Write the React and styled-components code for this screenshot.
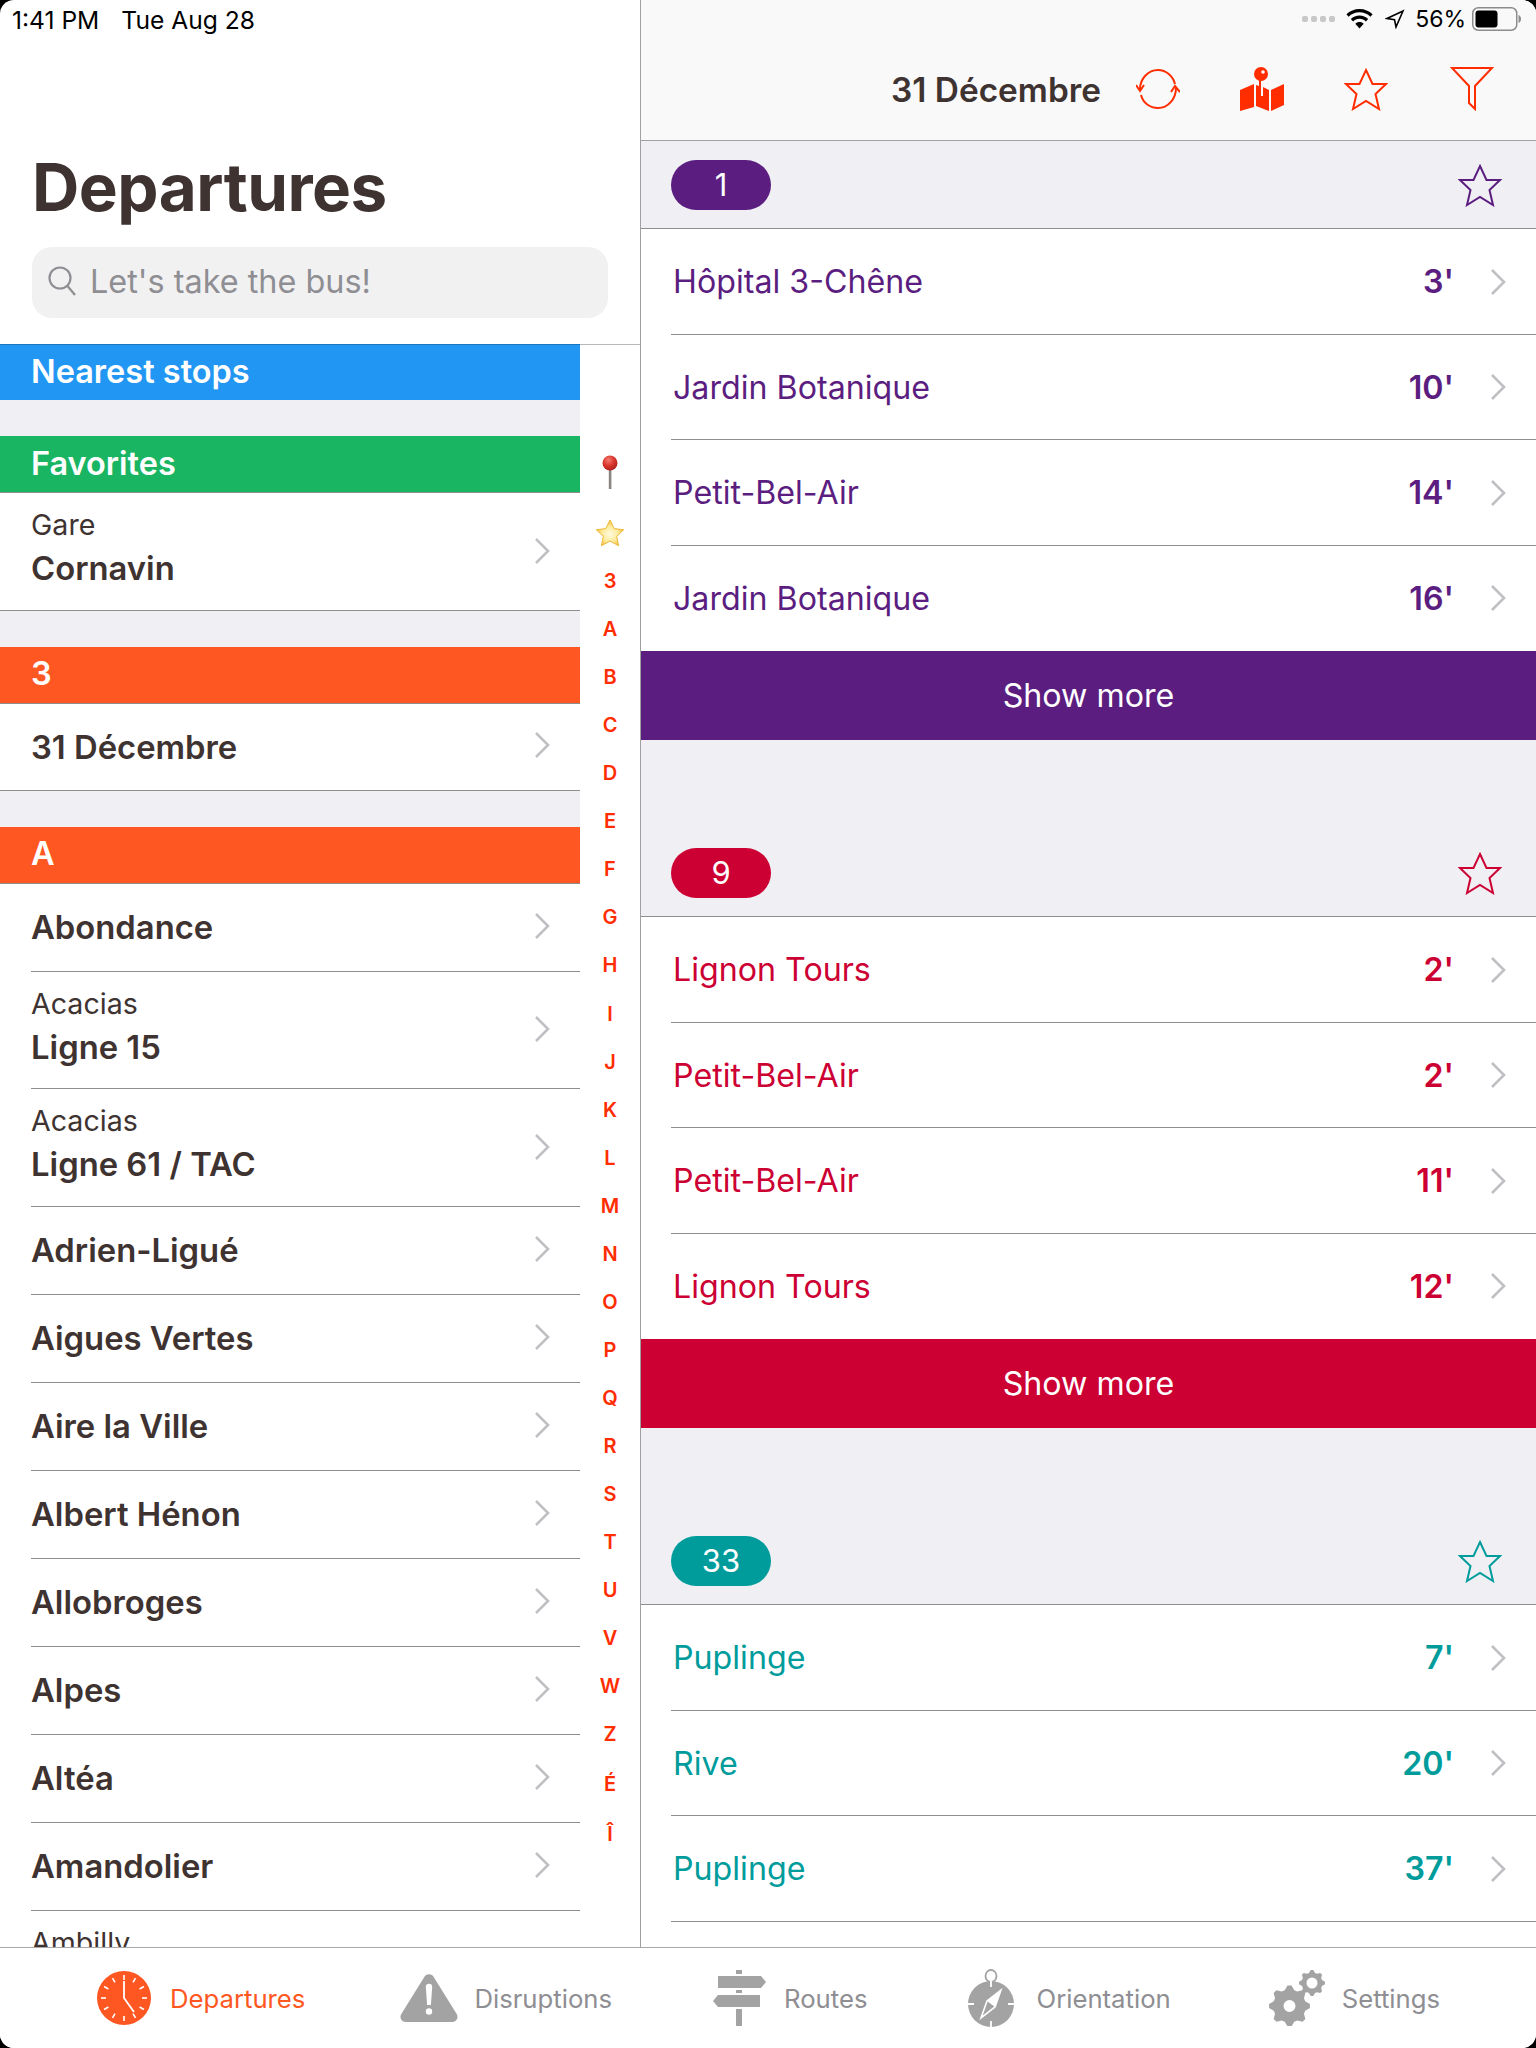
import React from "react";
import styled, { createGlobalStyle } from "styled-components";

const TINT = "#ff2d00";
const INK = "#3e3331";
const GREY = "#efeff4";
const LINE = "#8e8e8e";
const ICON = "#a3a3a3";

const Global = createGlobalStyle`
  html, body { margin: 0; padding: 0; background: #000; }
  body { font-family: Inter, "Liberation Sans", sans-serif; color: ${INK}; }
  * { box-sizing: border-box; }
`;

const Screen = styled.div`
  width: 1536px;
  height: 2048px;
  background: #fff;
  border-radius: 14px;
  overflow: hidden;
  display: flex;
  flex-direction: column;
`;
const Panels = styled.div`
  flex: 1;
  min-height: 0;
  display: flex;
`;
const Master = styled.div`
  width: 641px;
  border-right: 1px solid #a0a0a0;
  display: flex;
  flex-direction: column;
  overflow: hidden;
`;
const MasterHead = styled.div`
  height: 344px;
  padding: 6px 32px 0;
  flex: none;
`;
const Clock = styled.div`
  margin-left: -20px;
  font-size: 24.6px;
  line-height: 28px;
  color: #000;
  span { margin-left: 22px; }
`;
const Title = styled.h1`
  margin: 118px 0 0;
  font-size: 65.5px;
  line-height: 72px;
  font-weight: 700;
  letter-spacing: -0.5px;
`;
const Search = styled.div`
  margin-top: 23px;
  width: 576px;
  height: 71px;
  border-radius: 20px;
  background: #f1f1f2;
  display: flex;
  align-items: center;
  padding: 0 0 3px 15px;
  gap: 13px;
  font-size: 32.4px;
  color: #8e8e93;
`;
const MasterBody = styled.div`
  flex: 1;
  min-height: 0;
  display: flex;
`;
const StopList = styled.div`
  width: 580px;
  overflow: hidden;
`;
const IndexBar = styled.div`
  width: 60px;
  border-top: 1px solid #b8b8b8;
  padding-top: 103px;
  display: flex;
  flex-direction: column;
  align-items: center;
  color: ${TINT};
  font-size: 20px;
  font-weight: 600;
`;
const IndexItem = styled.div`
  height: ${(p) => (p.$tall ? 52 : 48.05)}px;
  flex: none;
  display: flex;
  align-items: center;
  justify-content: center;
`;
const PinItem = styled(IndexItem)`
  margin-bottom: 13px;
`;
const Band = styled.div`
  height: 57px;
  padding: 0 0 2px 31px;
  background: ${(p) => p.$bg};
  border-bottom: 1px solid ${LINE};
  color: #fff;
  font-size: 32.5px;
  font-weight: 600;
  display: flex;
  align-items: center;
`;
const NearestBand = styled(Band)`
  height: 56px;
  border-bottom: none;
  border-top: 1px solid #1a76bd;
`;
const Gap = styled.div`
  height: 36px;
  background: ${GREY};
`;
const StopRow = styled.div`
  position: relative;
  height: ${(p) => p.$h}px;
  padding: 0 30px ${(p) => (p.$hasSub ? 2 : 4)}px 31px;
  display: flex;
  align-items: center;
  justify-content: space-between;
  &::after {
    content: "";
    position: absolute;
    left: ${(p) => (p.$full ? 0 : "31px")};
    right: 0;
    bottom: 0;
    height: 1px;
    background: ${LINE};
  }
`;
const StopText = styled.div`
  display: flex;
  flex-direction: column;
  margin: ${(p) => (p.$hasSub ? "0 0 3px" : "3px 0 0")};
`;
const StopSub = styled.div`
  font-size: 28.6px;
  line-height: 38px;
`;
const StopName = styled.div`
  font-size: 32.8px;
  line-height: 48px;
  font-weight: 600;
  min-height: 48px;
`;

const Detail = styled.div`
  flex: 1;
  min-width: 0;
  overflow: hidden;
  background: ${GREY};
`;
const DetailHead = styled.div`
  height: 141px;
  background: #f9f9f9;
  border-bottom: 1px solid #a0a0a0;
`;
const StatusRight = styled.div`
  height: 30px;
  padding: 8px 15px 0 0;
  display: flex;
  justify-content: flex-end;
  align-items: center;
  font-size: 23px;
  color: #000;
`;
const Dots = styled.div`
  display: flex;
  gap: 3px;
  margin-right: 11px;
  i { width: 6px; height: 6px; border-radius: 2px; background: #c8c8c8; }
`;
const WifiWrap = styled.div`
  display: flex;
  margin-right: 12px;
`;
const Percent = styled.span`
  margin: 0 6px 0 10px;
`;
const NavBar = styled.div`
  height: 110px;
  padding: 37px 42px 0 0;
  display: flex;
  justify-content: flex-end;
  align-items: flex-start;
`;
const NavTitle = styled.div`
  height: 44px;
  line-height: 46px;
  font-size: 33.4px;
  font-weight: 600;
  margin-right: 35px;
`;
const NavIcon = styled.div`
  width: 44px;
  height: 44px;
  margin-left: ${(p) => p.$gap || 0}px;
`;
const LineSection = styled.section`
  margin-bottom: 89px;
`;
const LineHead = styled.div`
  height: 88px;
  padding: 0 34px 0 30px;
  background: ${GREY};
  border-bottom: 1px solid ${LINE};
  display: flex;
  align-items: center;
  justify-content: space-between;
`;
const Pill = styled.div`
  width: 100px;
  height: 50px;
  border-radius: 25px;
  background: ${(p) => p.$color};
  color: #fff;
  font-size: 31px;
  display: flex;
  align-items: center;
  justify-content: center;
`;
const DepartureRow = styled.div`
  position: relative;
  height: 105.5px;
  padding: 0 30px 0 32px;
  background: #fff;
  display: flex;
  align-items: center;
  font-size: 32.2px;
  color: ${(p) => p.$color};
  &::after {
    content: "";
    display: ${(p) => (p.$last ? "none" : "block")};
    position: absolute;
    left: 30px;
    right: 0;
    bottom: 0;
    height: 1px;
    background: ${LINE};
  }
`;
const Destination = styled.div`
  flex: 1;
`;
const Minutes = styled.div`
  font-weight: 600;
  margin-right: 36px;
`;
const ShowMore = styled.div`
  height: 89px;
  background: ${(p) => p.$color};
  color: #fff;
  font-size: 32.2px;
  display: flex;
  align-items: center;
  justify-content: center;
`;

const TabBar = styled.div`
  height: 101px;
  flex: none;
  background: #fff;
  border-top: 1px solid #a8a8a8;
  padding-left: 97px;
  display: flex;
  align-items: center;
`;
const Tab = styled.div`
  display: flex;
  align-items: center;
  margin-left: ${(p) => p.$left || 0}px;
  gap: ${(p) => p.$gap}px;
  font-size: 25.7px;
  color: ${(p) => (p.$active ? "#ff5722" : "#8e8e93")};
`;

const Chevron = () => (
  <svg width="16" height="28" viewBox="0 0 16 28" fill="none" stroke="#c0c0c4" strokeWidth="2.6">
    <path d="M2 2l12 12L2 26" />
  </svg>
);

const StarOutline = ({ color, size = 44 }) => (
  <svg width={size} height={size} viewBox="0 0 44 44" fill="none" stroke={color} strokeWidth="2">
    <path d="M22 3l6.5 14H42L31.5 27l3.5 15L22 34 9 42l3.5-15L2 17h13.5z" />
  </svg>
);

const Refresh = () => (
  <svg width="44" height="44" viewBox="0 0 44 44" fill="none" stroke={TINT} strokeWidth="2">
    <path d="M4 22C4 12 12 3 22 3c8 0 15 6 17 14" />
    <path d="M40 21c0 11-8 20-18 20-8 0-15-5-17-13" />
    <path d="M0 18l4 6 4-6" />
    <path d="M35 25l4-6 5 6" />
  </svg>
);

const MapPin = () => (
  <svg width="44" height="44" viewBox="0 0 44 44" fill={TINT}>
    <circle cx="21" cy="7" r="7" />
    <circle cx="23" cy="5" r="1.8" fill="#f9f9f9" />
    <path d="M0 23l14-6v23L0 44z" />
    <path d="M16 18l3 1V13h2v16h2V20l6 3v21l-13-5z" />
    <path d="M31 23l13-6v21l-13 6z" />
  </svg>
);

const Funnel = () => (
  <svg width="44" height="44" viewBox="0 0 44 44" fill="none" stroke={TINT} strokeWidth="2">
    <path d="M2 1h40L25 19v23l-6-6V19z" />
  </svg>
);

const SearchGlass = () => (
  <svg width="30" height="32" viewBox="0 0 30 32" fill="none" stroke="#8e8e93" strokeWidth="2.2">
    <circle cx="13" cy="13" r="10.5" />
    <path d="M20.5 21L28 30" />
  </svg>
);

const Wifi = () => (
  <svg width="27" height="20" viewBox="0 0 27 20" fill="#000">
    <path d="M13.5 0C8.4 0 3.8 2 .4 5.3l2.2 2.4C5.4 5 9.3 3.3 13.5 3.3S21.600 5 24.400 7.700l2.200-2.400C23.200 2 18.600 0 13.500 0z" />
    <path d="M13.500 6.500c-3.300 0-6.400 1.300-8.700 3.500l2.300 2.400c1.700-1.600 3.900-2.600 6.400-2.600s4.700 1 6.400 2.600l2.300-2.400c-2.300-2.200-5.400-3.500-8.700-3.500z" />
    <path d="M13.500 13c-1.600 0-3.100.6-4.200 1.700l4.200 4.800 4.200-4.800C16.600 13.600 15.100 13 13.500 13z" />
  </svg>
);

const Arrow = () => (
  <svg width="20" height="20" viewBox="0 0 20 20" fill="none" stroke="#000" strokeWidth="1.6">
    <path d="M18 2L2 9.500l7.500 1.200L11 18z" />
  </svg>
);

const Battery = () => (
  <svg width="49" height="24" viewBox="0 0 49 24">
    <rect x=".75" y=".75" width="44" height="22.500" rx="5.500" fill="none" stroke="#8c8c8c" strokeWidth="1.500" />
    <rect x="3.500" y="3.500" width="22" height="17" rx="3" fill="#000" />
    <path d="M46.500 8c1.500.4 2.500 2 2.500 4s-1 3.600-2.500 4z" fill="#8c8c8c" />
  </svg>
);

const RedPin = () => (
  <svg width="18" height="36" viewBox="0 0 18 36">
    <defs>
      <radialGradient id="pinHead" cx="0.4" cy="0.3" r="0.8">
        <stop offset="0" stopColor="#f47a6e" />
        <stop offset="0.5" stopColor="#d8342b" />
        <stop offset="1" stopColor="#a31b1b" />
      </radialGradient>
    </defs>
    <rect x="7.800" y="12" width="2.600" height="23" fill="#8a8683" />
    <circle cx="9" cy="9" r="7.500" fill="url(#pinHead)" />
  </svg>
);

const GoldStar = () => (
  <svg width="30" height="28" viewBox="0 0 30 28">
    <defs>
      <radialGradient id="goldStar" cx="0.5" cy="0.55" r="0.55">
        <stop offset="0" stopColor="#fffbe0" />
        <stop offset="0.55" stopColor="#fdea9a" />
        <stop offset="1" stopColor="#f2b632" />
      </radialGradient>
    </defs>
    <path
      d="M15 1l4.200 8.600 9.500 1.200-7 6.500 1.900 9.400L15 22.100l-8.600 4.600 1.900-9.400-7-6.500 9.500-1.200z"
      fill="url(#goldStar)"
      stroke="#edb93a"
      strokeWidth="1"
      strokeLinejoin="round"
    />
  </svg>
);

const ClockIcon = () => {
  const ticks = Array.from({ length: 12 }, (_, i) => i * 30);
  return (
    <svg width="54" height="54" viewBox="0 0 54 54">
      <circle cx="27" cy="27" r="27" fill="#ff5722" />
      {ticks.map((a) => (
        <rect key={a} x="26.200" y="4" width="1.600" height="5" fill="#fff" transform={`rotate(${a} 27 27)`} />
      ))}
      <path d="M27 10v17l10 14" fill="none" stroke="#fff" strokeWidth="1.800" />
    </svg>
  );
};

const Warning = () => (
  <svg width="58" height="48" viewBox="0 0 58 48">
    <path
      d="M24 3.500c2-4.200 8-4.200 10 0l23 37c1.500 3.300-.5 7.500-4.500 7.500h-47c-4 0-6-4.200-4.500-7.500z"
      fill={ICON}
    />
    <path d="M25.800 13a3.200 3.200 0 0 1 6.400 0l-1.300 18h-3.800z" fill="#fff" />
    <circle cx="29" cy="37.500" r="3.200" fill="#fff" />
  </svg>
);

const Signpost = () => (
  <svg width="54" height="56" viewBox="0 0 54 56" fill={ICON}>
    <rect x="24" y="0" width="6" height="4" />
    <path d="M6 6h43l5 6-5 6H6z" />
    <rect x="24" y="20" width="6" height="3" />
    <path d="M48 25H6l-5 6 5 6h42z" />
    <rect x="24" y="39" width="6" height="17" />
  </svg>
);

const Compass = () => (
  <svg width="46" height="58" viewBox="0 0 46 58">
    <ellipse cx="23" cy="7" rx="5.500" ry="6" fill="none" stroke={ICON} strokeWidth="1.800" />
    <circle cx="23" cy="35" r="23" fill={ICON} />
    <path d="M23 12v6M23 52v6M0 35h6M40 35h6" stroke="#fff" strokeWidth="1.800" />
    <path d="M33 21L27 38 13 49l6-17z" fill="none" stroke="#fff" strokeWidth="1.600" />
    <path d="M33 21L19 32l8 6z" fill="#fff" />
  </svg>
);

const gearPath = (cx, cy, r, hole, teeth) => {
  const out = [];
  for (let i = 0; i < teeth * 4; i++) {
    const a = (i * Math.PI * 2) / (teeth * 4) - Math.PI / (teeth * 4);
    const rad = i % 4 < 2 ? r : r * 0.8;
    out.push(`${(cx + rad * Math.cos(a)).toFixed(2)} ${(cy + rad * Math.sin(a)).toFixed(2)}`);
  }
  const ring = `M${cx - hole} ${cy}a${hole} ${hole} 0 1 0 ${hole * 2} 0a${hole} ${hole} 0 1 0 ${-hole * 2} 0z`;
  return `M${out.join("L")}z${ring}`;
};

const Gears = () => (
  <svg width="56" height="56" viewBox="0 0 56 56" fill={ICON} fillRule="evenodd">
    <path d={gearPath(20.500, 36, 20.500, 6, 8)} />
    <path d={gearPath(43, 13, 13, 5.500, 8)} />
  </svg>
);

const indexLetters = "3 A B C D E F G H I J K L M N O P Q R S T U V W Z É Î".split(" ");

const alphaStops = [
  { name: "Abondance" },
  { sub: "Acacias", name: "Ligne 15" },
  { sub: "Acacias", name: "Ligne 61 / TAC" },
  { name: "Adrien-Ligué" },
  { name: "Aigues Vertes" },
  { name: "Aire la Ville" },
  { name: "Albert Hénon" },
  { name: "Allobroges" },
  { name: "Alpes" },
  { name: "Altéa" },
  { name: "Amandolier" },
  { sub: "Ambilly" },
];

const lines = [
  {
    id: "1",
    color: "#5b1e80",
    rows: [
      ["Hôpital 3-Chêne", "3'"],
      ["Jardin Botanique", "10'"],
      ["Petit-Bel-Air", "14'"],
      ["Jardin Botanique", "16'"],
    ],
    more: true,
  },
  {
    id: "9",
    color: "#cc0033",
    rows: [
      ["Lignon Tours", "2'"],
      ["Petit-Bel-Air", "2'"],
      ["Petit-Bel-Air", "11'"],
      ["Lignon Tours", "12'"],
    ],
    more: true,
  },
  {
    id: "33",
    color: "#009c9c",
    rows: [
      ["Puplinge", "7'"],
      ["Rive", "20'"],
      ["Puplinge", "37'"],
      // runs on under the tab bar
      ["", ""],
    ],
  },
];

function Stop({ sub, name, full }) {
  const height = sub ? 117.5 : full ? 87 : 88;
  return (
    <StopRow $h={height} $full={full} $hasSub={!!sub}>
      <StopText $hasSub={!!sub}>
        {sub && <StopSub>{sub}</StopSub>}
        <StopName>{name}</StopName>
      </StopText>
      <Chevron />
    </StopRow>
  );
}

export default function App() {
  return (
    <Screen>
      <Global />
      <Panels>
        <Master>
          <MasterHead>
            <Clock>
              1:41 PM<span>Tue Aug 28</span>
            </Clock>
            <Title>Departures</Title>
            <Search>
              <SearchGlass />
              Let's take the bus!
            </Search>
          </MasterHead>
          <MasterBody>
            <StopList>
              <NearestBand $bg="#2196f3">Nearest stops</NearestBand>
              <Gap />
              <Band $bg="#19b563">Favorites</Band>
              <Stop sub="Gare" name="Cornavin" full />
              <Gap />
              <Band $bg="#ff5722">3</Band>
              <Stop name="31 Décembre" full />
              <Gap />
              <Band $bg="#ff5722">A</Band>
              {alphaStops.map((s, i) => (
                <Stop key={i} {...s} />
              ))}
            </StopList>
            <IndexBar>
              <PinItem><RedPin /></PinItem>
              <IndexItem><GoldStar /></IndexItem>
              {indexLetters.map((l) => (
                <IndexItem key={l} $tall={l === "É"}>{l}</IndexItem>
              ))}
            </IndexBar>
          </MasterBody>
        </Master>
        <Detail>
          <DetailHead>
            <StatusRight>
              <Dots><i /><i /><i /><i /></Dots>
              <WifiWrap><Wifi /></WifiWrap>
              <Arrow />
              <Percent>56%</Percent>
              <Battery />
            </StatusRight>
            <NavBar>
              <NavTitle>31 Décembre</NavTitle>
              <NavIcon><Refresh /></NavIcon>
              <NavIcon $gap={60}><MapPin /></NavIcon>
              <NavIcon $gap={60}><StarOutline color={TINT} /></NavIcon>
              <NavIcon $gap={62}><Funnel /></NavIcon>
            </NavBar>
          </DetailHead>
          {lines.map((line) => (
            <LineSection key={line.id}>
              <LineHead>
                <Pill $color={line.color}>{line.id}</Pill>
                <StarOutline color={line.color} />
              </LineHead>
              {line.rows.map(([dest, min], i) => (
                <DepartureRow key={i} $color={line.color} $last={line.more && i === line.rows.length - 1}>
                  <Destination>{dest}</Destination>
                  <Minutes>{min}</Minutes>
                  <Chevron />
                </DepartureRow>
              ))}
              {line.more && <ShowMore $color={line.color}>Show more</ShowMore>}
            </LineSection>
          ))}
        </Detail>
      </Panels>
      <TabBar>
        <Tab $active $gap={19}><ClockIcon />Departures</Tab>
        <Tab $left={95} $gap={16}><Warning />Disruptions</Tab>
        <Tab $left={100} $gap={18}><Signpost />Routes</Tab>
        <Tab $left={101} $gap={22}><Compass />Orientation</Tab>
        <Tab $left={98} $gap={17}><Gears />Settings</Tab>
      </TabBar>
    </Screen>
  );
}
